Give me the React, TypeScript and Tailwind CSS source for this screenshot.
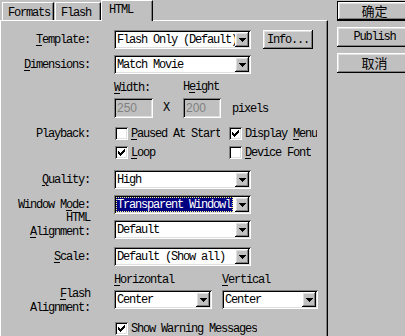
import React from 'react';

const sunken =
  'shadow-[inset_1px_1px_#808080,inset_-1px_-1px_#ffffff,inset_2px_2px_#000000,inset_-2px_-2px_#dfdfdf]';
const raised =
  'shadow-[inset_-1px_-1px_#000000,inset_1px_1px_#ffffff,inset_-2px_-2px_#808080,inset_2px_2px_#dfdfdf]';

const Arrow = () => (
  <svg width="7" height="4" viewBox="0 0 7 4" shapeRendering="crispEdges">
    <rect x="0" y="0" width="7" height="1" fill="#000" />
    <rect x="1" y="1" width="5" height="1" fill="#000" />
    <rect x="2" y="2" width="3" height="1" fill="#000" />
    <rect x="3" y="3" width="1" height="1" fill="#000" />
  </svg>
);

const Check = () => (
  <svg width="7" height="7" viewBox="0 0 7 7" shapeRendering="crispEdges">
    {[2, 3, 4, 3, 2, 1, 0].map((y, x) => (
      <rect key={x} x={x} y={y} width="1" height="3" fill="#000" />
    ))}
  </svg>
);

const Select: React.FC<{ value: string; className: string; focus?: boolean }> = ({ value, className, focus }) => (
  <div className={`h-[19px] bg-white p-[2px] flex items-center ${sunken} ${className}`}>
    <div className="flex-1 min-w-0 h-full flex items-center overflow-hidden whitespace-nowrap">
      {focus ? (
        <span className="flex-1 h-full mr-[2px] flex items-center overflow-hidden bg-[#000080] text-white border border-dotted border-[#ffff80]">
          {value}
        </span>
      ) : (
        <span className="pl-[1px]">{value}</span>
      )}
    </div>
    <div className={`w-[14px] h-[15px] shrink-0 bg-[#c0c0c0] flex items-center justify-center ${raised}`}>
      <Arrow />
    </div>
  </div>
);

const CheckBox: React.FC<{ checked?: boolean; children: React.ReactNode; className?: string }> = ({
  checked,
  children,
  className = '',
}) => (
  <div className={`flex items-center h-[13px] whitespace-nowrap overflow-hidden ${className}`}>
    <div className={`w-[13px] h-[13px] ml-[1px] shrink-0 bg-white flex items-center justify-center ${sunken}`}>
      {checked && <Check />}
    </div>
    <span className="ml-[3px]">{children}</span>
  </div>
);

const U: React.FC<{ children: React.ReactNode }> = ({ children }) => (
  <span className="underline underline-offset-2">{children}</span>
);

const Label: React.FC<{ children?: React.ReactNode; className?: string }> = ({ children, className = '' }) => (
  <div className={`w-[89px] shrink-0 text-right whitespace-nowrap ${className}`}>{children}</div>
);

const Disabled: React.FC<{ value: string; className: string }> = ({ value, className }) => (
  <div
    className={`h-[20px] pl-[3px] flex items-center bg-[#c0c0c0] text-[#808080] font-['Liberation_Sans',sans-serif] tracking-normal text-[12px] ${sunken} ${className}`}
  >
    {value}
  </div>
);

const Button: React.FC<{ children: React.ReactNode; isDefault?: boolean; cjk?: boolean }> = ({
  children,
  isDefault,
  cjk,
}) => (
  <div className={`w-[75px] h-[20px] shrink-0 ${isDefault ? 'border border-black' : ''}`}>
    <div
      className={`w-full h-full flex items-center justify-center ${raised} ${
        cjk ? "font-['Noto_Sans_CJK_SC',sans-serif] tracking-normal text-[13px]" : ''
      }`}
    >
      {children}
    </div>
  </div>
);

export default function App() {
  return (
    <div className="w-[405px] h-[336px] overflow-hidden bg-[#c0c0c0] flex text-black text-[12px] leading-[14px] tracking-[-1.2px] font-['Liberation_Mono',monospace]">
      {/* tabs + panel */}
      <div className="w-[328px] shrink-0 flex flex-col">
        <div className="h-[20px] flex items-end pl-[2px]">
          <div className="w-[52px] h-[18px] pl-[5px] pt-[3px] border-t border-l border-white border-r border-r-black shadow-[inset_-1px_0_#808080]">
            Formats
          </div>
          <div className="w-[46px] h-[18px] ml-[1px] pl-[5px] pt-[3px] border-t border-l border-white border-r border-r-black shadow-[inset_-1px_0_#808080]">
            Flash
          </div>
          <div className="relative z-10 w-[52px] h-[21px] -mb-[1px] pl-[7px] pt-[2px] bg-[#c0c0c0] border-t border-l border-white border-r border-r-black shadow-[inset_-1px_0_#808080]">
            HTML
          </div>
        </div>

        <div className="flex-1 border-t border-l border-white border-r border-r-black shadow-[inset_-1px_0_#808080] pt-[9px] flex flex-col">
          {/* Template */}
          <div className="flex items-center h-[19px]">
            <Label>
              <U>T</U>emplate:
            </Label>
            <Select value="Flash Only (Default)" className="ml-[24px] w-[137px]" />
            <div className={`ml-[12px] w-[50px] h-[19px] flex items-center justify-center ${raised}`}>Info...</div>
          </div>

          {/* Dimensions */}
          <div className="flex items-center h-[19px] mt-[6px]">
            <Label>
              <U>D</U>imensions:
            </Label>
            <Select value="Match Movie" className="ml-[24px] w-[137px]" />
          </div>

          {/* Width / Height labels */}
          <div className="flex items-center h-[14px] mt-[6px] pl-[113px]">
            <span className="w-[69px] mt-[2px]">
              <U>W</U>idth:
            </span>
            <span>
              H<U>e</U>ight
            </span>
          </div>

          {/* inputs */}
          <div className="flex items-center h-[20px] mt-[4px] pl-[113px]">
            <Disabled value="250" className="w-[39px]" />
            <span className="w-[30px] pl-[10px]">X</span>
            <Disabled value="200" className="w-[38px]" />
            <span className="ml-[11px] mt-[2px]">pixels</span>
          </div>

          {/* Playback */}
          <div className="flex items-center h-[13px] mt-[9px]">
            <Label>Playback:</Label>
            <CheckBox className="ml-[24px] w-[106px]">
              <U>P</U>aused At Start
            </CheckBox>
            <CheckBox checked className="ml-[8px]">
              Display <U>M</U>enu
            </CheckBox>
          </div>
          <div className="flex items-center h-[13px] mt-[6px]">
            <Label />
            <CheckBox checked className="ml-[24px] w-[106px]">
              <U>L</U>oop
            </CheckBox>
            <CheckBox className="ml-[8px]">
              <U>D</U>evice Font
            </CheckBox>
          </div>

          {/* Quality */}
          <div className="flex items-center h-[19px] mt-[11px]">
            <Label>
              <U>Q</U>uality:
            </Label>
            <Select value="High" className="ml-[24px] w-[137px]" />
          </div>

          {/* Window Mode */}
          <div className="flex items-center h-[19px] mt-[6px]">
            <Label>
              Window M<U>o</U>de:
            </Label>
            <Select value="Transparent Windowless" focus className="ml-[24px] w-[137px]" />
          </div>

          {/* HTML Alignment */}
          <div className="flex items-start h-[19px] mt-[6px]">
            <Label className="-mt-[9px]">
              HTML
              <br />
              <U>A</U>lignment:
            </Label>
            <Select value="Default" className="ml-[24px] w-[137px]" />
          </div>

          {/* Scale */}
          <div className="flex items-center h-[19px] mt-[8px]">
            <Label>
              <U>S</U>cale:
            </Label>
            <Select value="Default (Show all)" className="ml-[24px] w-[137px]" />
          </div>

          {/* Horizontal / Vertical labels */}
          <div className="flex items-center h-[14px] mt-[7px] pl-[113px]">
            <span className="w-[108px]">
              <U>H</U>orizontal
            </span>
            <span>
              <U>V</U>ertical
            </span>
          </div>

          {/* Flash Alignment */}
          <div className="flex items-start h-[19px] mt-[3px]">
            <Label className="-mt-[3px]">
              <U>F</U>lash
              <br />
              Alignment:
            </Label>
            <Select value="Center" className="ml-[24px] w-[98px]" />
            <Select value="Center" className="ml-[10px] w-[96px]" />
          </div>

          {/* warning */}
          <div className="flex items-center h-[13px] mt-[13px] pl-[113px]">
            <CheckBox checked>Show Warning Messages</CheckBox>
          </div>
        </div>
      </div>

      {/* dialog buttons */}
      <div className="ml-[9px] pt-[1px] flex flex-col gap-[6px]">
        <Button isDefault cjk>
          确定
        </Button>
        <Button>Publish</Button>
        <Button cjk>取消</Button>
      </div>
    </div>
  );
}
